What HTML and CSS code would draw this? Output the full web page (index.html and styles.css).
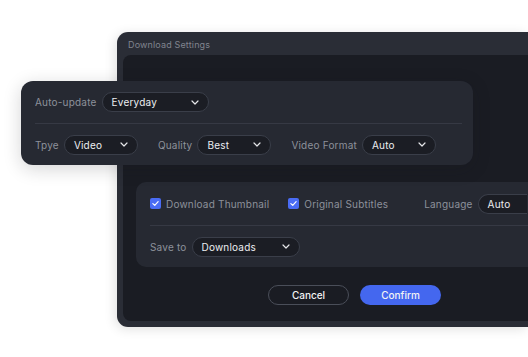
FILE: index.html
```html
<!DOCTYPE html>
<html>
<head>
<meta charset="utf-8">
<link rel="stylesheet" href="styles.css">
</head>
<body>
<div class="stage">
  <div class="window">
    <div class="title">Download Settings</div>
    <div class="inner">
      <div class="card card-lower">
        <div class="row">
          <label class="check"><span class="box"><svg viewBox="0 0 12 12" width="9" height="9"><path d="M2.5 6.2 L5 8.5 L9.5 3.5" fill="none" stroke="#fff" stroke-width="1.6" stroke-linecap="round" stroke-linejoin="round"/></svg></span>Download Thumbnail</label>
          <label class="check check2"><span class="box"><svg viewBox="0 0 12 12" width="9" height="9"><path d="M2.5 6.2 L5 8.5 L9.5 3.5" fill="none" stroke="#fff" stroke-width="1.6" stroke-linecap="round" stroke-linejoin="round"/></svg></span>Original Subtitles</label>
          <span class="label lang">Language</span>
          <div class="select w-lang"><span>Auto</span></div>
        </div>
        <div class="row">
          <span class="label">Save to</span>
          <div class="select w-save"><span>Downloads</span><svg class="chev" viewBox="0 0 8 5" width="8" height="5"><path d="M1 1 L4 4 L7 1" fill="none" stroke="#e6e7ea" stroke-width="1.2" stroke-linecap="round" stroke-linejoin="round"/></svg></div>
        </div>
      </div>
      <div class="actions">
        <button class="btn cancel">Cancel</button>
        <button class="btn confirm">Confirm</button>
      </div>
    </div>
  </div>
  <div class="card card-float">
    <div class="row">
      <span class="label">Auto-update</span>
      <div class="select w-auto"><span>Everyday</span><svg class="chev" viewBox="0 0 8 5" width="8" height="5"><path d="M1 1 L4 4 L7 1" fill="none" stroke="#e6e7ea" stroke-width="1.2" stroke-linecap="round" stroke-linejoin="round"/></svg></div>
    </div>
    <div class="row">
      <span class="label">Tpye</span>
      <div class="select w-sm"><span>Video</span><svg class="chev" viewBox="0 0 8 5" width="8" height="5"><path d="M1 1 L4 4 L7 1" fill="none" stroke="#e6e7ea" stroke-width="1.2" stroke-linecap="round" stroke-linejoin="round"/></svg></div>
      <span class="label gap-l">Quality</span>
      <div class="select w-sm"><span>Best</span><svg class="chev" viewBox="0 0 8 5" width="8" height="5"><path d="M1 1 L4 4 L7 1" fill="none" stroke="#e6e7ea" stroke-width="1.2" stroke-linecap="round" stroke-linejoin="round"/></svg></div>
      <span class="label gap-l">Video Format</span>
      <div class="select w-sm"><span>Auto</span><svg class="chev" viewBox="0 0 8 5" width="8" height="5"><path d="M1 1 L4 4 L7 1" fill="none" stroke="#e6e7ea" stroke-width="1.2" stroke-linecap="round" stroke-linejoin="round"/></svg></div>
    </div>
  </div>
</div>
</body>
</html>
```

FILE: styles.css
```css
* { box-sizing: border-box; }
html, body {
  margin: 0;
  padding: 0;
  background: #ffffff;
  width: 528px;
  height: 357px;
  overflow: hidden;
  font-family: "Inter", "Open Sans", sans-serif;
}
.stage {
  position: relative;
  width: 528px;
  height: 357px;
  padding: 32px 0 0 117px;
}
.window {
  width: 411px;
  height: 295px;
  background: #2a2d36;
  border-radius: 11px 0 0 11px;
  padding: 0 0 6px 6px;
  display: flex;
  flex-direction: column;
  box-shadow: -2px 2px 12px rgba(0,0,0,0.12);
}
.title {
  height: 23px;
  display: flex;
  align-items: center;
  padding-left: 5px;
  padding-top: 1px;
  font-size: 9px;
  color: #80848e;
  letter-spacing: 0.15px;
}
.inner {
  flex: 1;
  background: #1a1c23;
  border-radius: 8px 0 0 8px;
  padding: 127px 0 0 13px;
  display: flex;
  flex-direction: column;
}
.card {
  background: #262932;
  display: flex;
  flex-direction: column;
}
.card-lower {
  height: 85px;
  border-radius: 10px 0 0 10px;
  padding-left: 14px;
}
.card-float {
  position: absolute;
  left: 21px;
  top: 81px;
  width: 452px;
  height: 84px;
  border-radius: 12px;
  padding: 0 11px 0 14px;
  box-shadow: 0 4px 18px rgba(20,22,30,0.18);
}
.row {
  flex: 1;
  display: flex;
  align-items: center;
}
.row + .row { border-top: 1px solid #363944; }
.card-float .row:first-child { height: 42px; flex: none; }
.card-lower .row:first-child { height: 43px; flex: none; }
.label {
  font-size: 10px;
  color: #8d919b;
  margin-right: 5px;
  letter-spacing: 0.2px;
}
.gap-l { margin-left: 20px; }
.select {
  height: 20px;
  border: 1px solid #3a3e49;
  background: #1b1d24;
  border-radius: 10px;
  display: flex;
  align-items: center;
  justify-content: space-between;
  padding: 0 9px 0 9px;
  font-size: 10px;
  color: #eceef1;
  letter-spacing: 0.2px;
}
.chev { display: block; }
.w-auto { width: 107px; }
.w-sm { width: 74px; }
.w-save { width: 108px; }
.w-lang { width: 49px; border-right: none; border-radius: 10px 0 0 10px; }
.check {
  display: flex;
  align-items: center;
  font-size: 10px;
  color: #8d919b;
  letter-spacing: 0.2px;
}
.check2 { margin-left: 19px; }
.box {
  width: 11px;
  height: 11px;
  border-radius: 2px;
  background: #4a6cf5;
  display: flex;
  align-items: center;
  justify-content: center;
  margin-right: 5px;
}
.lang { margin-left: 36px; }
.actions {
  display: flex;
  gap: 11px;
  padding-left: 132px;
  margin-top: 18px;
}
.btn {
  width: 81px;
  height: 20px;
  border-radius: 10px;
  font-family: "Inter", "Open Sans", sans-serif;
  font-size: 10px;
  font-weight: 500;
  color: #f2f3f5;
  display: flex;
  align-items: center;
  justify-content: center;
  padding: 0;
}
.cancel {
  background: transparent;
  border: 1px solid #4a4e59;
}
.confirm {
  background: #4467ef;
  border: none;
}
```
